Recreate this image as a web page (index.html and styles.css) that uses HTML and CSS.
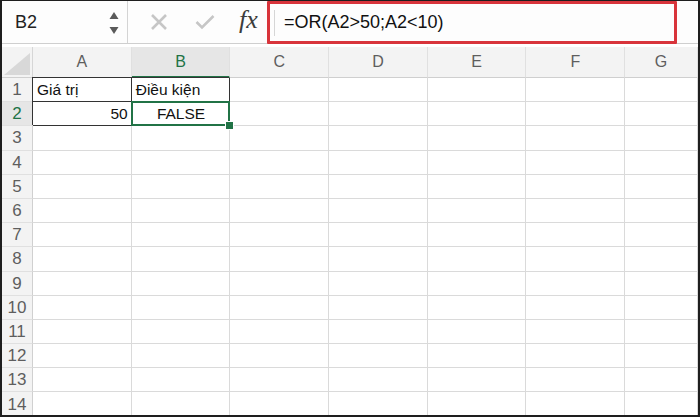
FILE: index.html
```html
<!DOCTYPE html>
<html lang="vi">

<head>
    <meta charset="UTF-8">
    <title>OR</title>
    <link rel="stylesheet" href="styles.css">
</head>

<body>
    <div class="frame">
        <div class="toolbar">
            <div class="namebox">
                <span class="ref">B2</span>
                <svg class="spin" width="10" height="24" viewBox="0 0 10 24">
                    <path d="M5 1 L9.5 8 L0.5 8 Z" fill="#5a5a5a" />
                    <path d="M0.5 16 L9.5 16 L5 23 Z" fill="#5a5a5a" />
                </svg>
            </div>
            <div class="actions">
                <svg class="icon" width="18" height="18" viewBox="0 0 18 18">
                    <path d="M2 2 L16 16 M16 2 L2 16" stroke="#c6c6c6" stroke-width="2.6" fill="none" />
                </svg>
                <svg class="icon" width="20" height="16" viewBox="0 0 20 16">
                    <path d="M1.5 8 L7 13.5 L18.5 2" stroke="#c6c6c6" stroke-width="2.6" fill="none" />
                </svg>
                <span class="fx">fx</span>
            </div>
            <div class="formula">
                <span class="caret"></span>
                <span class="ftext">=OR(A2&gt;50;A2&lt;10)</span>
            </div>
        </div>

        <div class="sheet">
            <div class="corner">
                <svg width="26" height="22" viewBox="0 0 26 22">
                    <path d="M26 0 L26 22 L0 22 Z" fill="#d8d8d8" />
                </svg>
            </div>
            <div class="colhead">A</div>
            <div class="colhead sel">B</div>
            <div class="colhead">C</div>
            <div class="colhead">D</div>
            <div class="colhead">E</div>
            <div class="colhead">F</div>
            <div class="colhead">G</div>

            <div class="rowhead">1</div>
            <div class="cell bd">Giá trị</div>
            <div class="cell bd">Điều kiện</div>
            <div class="cell"></div><div class="cell"></div><div class="cell"></div><div class="cell"></div><div class="cell"></div>

            <div class="rowhead sel">2</div>
            <div class="cell bd num">50</div>
            <div class="cell bd center active">FALSE<span class="handle"></span></div>
            <div class="cell"></div><div class="cell"></div><div class="cell"></div><div class="cell"></div><div class="cell"></div>
        </div>
    </div>
    <script>
        // empty rows 3..14
        const sheet = document.querySelector('.sheet');
        for (let r = 3; r <= 14; r++) {
            const head = document.createElement('div');
            head.className = 'rowhead';
            head.textContent = r;
            sheet.appendChild(head);
            for (let c = 0; c < 7; c++) {
                const cell = document.createElement('div');
                cell.className = 'cell';
                sheet.appendChild(cell);
            }
        }
    </script>
</body>

</html>
```

FILE: styles.css
```css
body {
    margin: 0;
    padding: 0;
    background-color: #fff;
    font-family: "Liberation Sans", Arial, sans-serif;
}

.frame {
    width: 700px;
    height: 417px;
    box-sizing: border-box;
    border: 2px solid #1e1e1e;
    border-top-width: 1px;
    overflow: hidden;
    background-color: #fff;
}

.toolbar {
    display: flex;
    height: 42px;
    border-bottom: 1px solid #cfcfcf;
    margin-bottom: 3px;
    background-color: #fdfdfd;
}

.namebox {
    width: 126px;
    display: flex;
    align-items: center;
    justify-content: space-between;
    padding: 0 8px 0 13px;
    box-sizing: border-box;
    border-right: 1px solid #d4d4d4;
}

.ref {
    font-size: 18px;
    color: #222;
}

.spin {
    margin-top: 1px;
}

.actions {
    width: 136px;
    display: flex;
    align-items: center;
    padding-left: 22px;
    box-sizing: border-box;
}

.actions .icon {
    margin-right: 27px;
}

.actions .icon + .icon {
    margin-right: 24px;
}

.fx {
    font-family: "Liberation Serif", "Times New Roman", serif;
    font-style: italic;
    font-size: 26px;
    color: #3c3c3c;
    margin-top: -4px;
}

.formula {
    width: 410px;
    height: 43px;
    box-sizing: border-box;
    border: 3px solid #d8343b;
    border-radius: 1px;
    display: flex;
    align-items: center;
    padding-left: 4px;
    margin-left: 3px;
    margin-top: 0;
}

.caret {
    width: 1px;
    height: 26px;
    background-color: #d6d6d6;
    margin-right: 9px;
}

.ftext {
    font-size: 18px;
    color: #111;
    margin-top: -1px;
}

.sheet {
    display: grid;
    grid-template-columns: 31px repeat(6, 98.7px) 1fr;
    grid-template-rows: 31px;
    grid-auto-rows: 24.2px;
}

.corner,
.colhead,
.rowhead {
    background-color: #f3f3f3;
    color: #5e5e5e;
    box-sizing: border-box;
}

.corner {
    display: flex;
    align-items: flex-end;
    justify-content: flex-end;
    padding: 0 2px 2px 0;
    border-right: 1px solid #d6d6d6;
    border-bottom: 1px solid #cfcfcf;
}

.colhead {
    display: flex;
    align-items: center;
    justify-content: center;
    font-size: 16px;
    border-right: 1px solid #e0e0e0;
    border-bottom: 1px solid #cfcfcf;
}

.colhead.sel {
    background-color: #e6e6e6;
    color: #217346;
    border-bottom: 2px solid #217346;
}

.rowhead {
    display: flex;
    align-items: center;
    justify-content: center;
    font-size: 17px;
    border-right: 1px solid #d0d0d0;
    border-bottom: 1px solid #e0e0e0;
    padding-top: 1px;
}

.rowhead.sel {
    background-color: #e6e6e6;
    color: #217346;
}

.cell {
    box-sizing: border-box;
    border-right: 1px solid #dadada;
    border-bottom: 1px solid #dadada;
    font-size: 15.5px;
    color: #111;
    display: flex;
    align-items: flex-end;
    padding: 0 3px 2px 4px;
    white-space: nowrap;
}

.cell.bd {
    border-right-color: #333;
    border-bottom-color: #333;
    box-shadow: -1px -1px 0 #333;
}

.cell.num {
    justify-content: flex-end;
}

.cell.center {
    justify-content: center;
}

.cell.active {
    position: relative;
}

.cell.active::after {
    content: "";
    position: absolute;
    left: -1px;
    top: -1px;
    right: -1px;
    bottom: -1px;
    border: 2px solid #217346;
}

.handle {
    position: absolute;
    right: -5px;
    bottom: -5px;
    width: 7px;
    height: 7px;
    background-color: #217346;
    border: 1px solid #fff;
    z-index: 2;
}
```
